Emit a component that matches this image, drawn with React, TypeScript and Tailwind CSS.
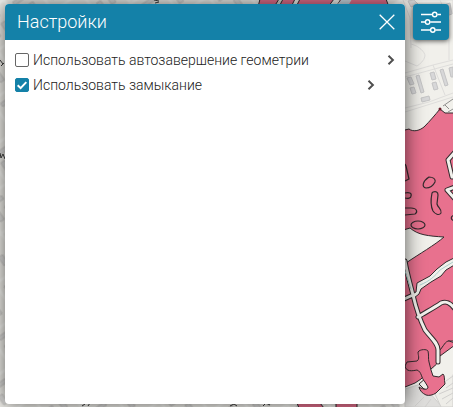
import { useState } from "react";

function MapBackdrop() {
  return (
    <svg
      className="absolute inset-0 h-full w-full"
      viewBox="0 0 453 407"
      preserveAspectRatio="xMaxYMin slice"
      aria-hidden="true"
    >
      <defs>
        <pattern id="blocks" width="34" height="38" patternUnits="userSpaceOnUse" patternTransform="rotate(-35)">
          <path d="M0 2H34M3 0V38" stroke="#f8f8f4" strokeWidth="3" />
          <path d="M9 9h16v4H9zM9 20h5v10H9zM21 20h5v10h-5z" fill="#dededc" stroke="#cecdca" />
        </pattern>
      </defs>
      <rect width="453" height="407" fill="#f1f0eb" />
      <rect width="405" height="407" fill="url(#blocks)" />

      {/* parts of street names */}
      <g fill="none" stroke="#3c3c3c" strokeWidth="1">
        <path d="M0 60l3 4M1 66l3-3M0 153l1 5 2-4 2 5M154 0l5 1M155 3l4-1M82 406l3-2M88 406l2-3M230 406l4-2 3 2M263 406l3-3 4 2" />
      </g>

      {/* streets and buildings on the right */}
      <g fill="none" stroke="#dedddb" strokeWidth="1">
        <path d="M403 0l7 18 1 30M412 0l5 10M440 0l9 20v40M411 44c8 2 14 8 14 12-1 5-5 8-8 10l-12-5" />
        <path d="M405 73l28-8 20-5M405 77l48-13M405 108l24-6 24-9M405 112l48-15M433 65l12 30" />
        <path d="M405 0h48v14" />
      </g>
      <g fill="#d7d7d8" stroke="#c4c4c5" strokeWidth="1">
        <path d="M407 78l4-1 3 7-4 1zM410 88l4-1 2 6-4 1zM416 76l3-1 5 17-3 1zM430 73l4-1 2 7-4 1zM432 83l4-1 2 7-4 1zM440 70l3-1 5 16-3 1zM449 68l4-1v10l-2 0z" />
        <path d="M421 98l8-2 1 4-8 2zM444 5l6-2 2 11-6 2zM408 1l6-1 4 4-7 3z" />
      </g>
      <g fill="#dedddb" stroke="#d0cfcd" strokeWidth="1">
        <path d="M405 389l16-5 8 8 13 15h-37z" />
        <path d="M433 366l20-16v57h-12l-6-13z" fill="#eeede8" />
        <path d="M446 374l7-6M446 381l7-5M446 388l7-5M439 394l14-6M442 399l11-6M446 404l7-6M424 397l-9 9M431 399l-6 8" />
      </g>

      {/* zones behind the panel's upper and lower edges */}
      <g fill="#e8718e" stroke="#322b2e" strokeWidth="1">
        <path d="M260-1h19l-5 8h-16zM283-1h12l-4 8h-12zM300-1h34l-6 8h-32zM341-1h45l3 8h-53z" />
        <path d="M297 403h23l4 5h-25zM336 403h21v5h-21z" />
      </g>
      <path d="M336 6l6-7h10l-4 7z" fill="#cfdde6" />

      {/* main zone */}
      <path
        d="M400 133l5-3 4-1c4 3 10 2 15-2 6-6 11-12 16-18l5 4h10v228l-7 0-8 9-1 12-8 7-10 10-6 4-10 4H400z"
        fill="#e8718e"
        stroke="#332a2d"
        strokeLinejoin="round"
      />
      <g fill="#f1f0eb" stroke="#332a2d" strokeWidth="1" strokeLinejoin="round">
        <path d="M400 231l10-3c8 7 18 8 34 9-9 8-25 17-38 26h-6z" />
        <path d="M430 372l6-6 4-11 15-13v31l-14 9-5-3z" stroke="none" />
        <path d="M419 384l7-6 3 4-1 8-4-1z" />
      </g>
      <path d="M440 356l-1-5c5-5 6-10 10-10l6 2v2z" fill="#e8718e" stroke="#332a2d" />

      {/* roads through the zone */}
      <g fill="none" strokeLinejoin="round" strokeLinecap="round">
        <path
          d="M405 261c2 12 5 22 8 34 3 13 6 23 12 35 6 8 13 13 13 20v12M402 300l11-5M418 317c8-5 16-9 23-14 5-2 9-1 14 6M455 152l-7 8 4 17M455 187l-8 3 8 9"
          stroke="#332a2d"
          strokeWidth="5"
        />
        <path
          d="M456 257l-10 5-9 7-7 7-13 7-1 9-4 2 2 4 5-4 2-5 10-7 10-6 5-6 10-6z"
          fill="#f1f0eb"
          stroke="#332a2d"
        />
        <path
          d="M405 261c2 12 5 22 8 34 3 13 6 23 12 35 6 8 13 13 13 20v12M402 300l11-5M418 317c8-5 16-9 23-14 5-2 9-1 14 6M455 152l-7 8 4 17M455 187l-8 3 8 9"
          stroke="#f1f0eb"
          strokeWidth="3"
        />
        <path d="M405 271l6 18M420 285c10-4 15-9 20-15l13-8" stroke="#a9d0cb" />
      </g>

      {/* winding zone at the lower edge */}
      <path
        d="M405 366l2-4 10-1c3-2 1-6 1-9 2-3 9-3 10-1 1 4 0 8 1 11l2 8 2 6 6 1 4-3c2 2 1 5 2 10l-9 9c-3 2-7 3-10 2-4-2-6-4-7-8 5 3 9 3 9 0l-3-5c-4-4-3-10-8-12-5 1-11 2-12-4z"
        fill="#e8718e"
        stroke="#332a2d"
        strokeLinejoin="round"
      />

      {/* small outlined parcels */}
      <g fill="none" stroke="#332a2d" strokeWidth="1.2">
        <path d="M405 164l1 2 3 13-4 2M405 193c4-1 7 0 6 3 0 2-3 3-6 2M405 208h6c6 0 7 4 4 6l-10 1" />
        <path d="M429 177c4 0 7 2 6 5-2 4-5 6-9 6-5-1-3-7 3-11zM433 192c3-1 5 0 5 3l-1 9c1 4 5 5 4 9-2 3-6 1-8-2-3-6-2-13-1-18z" />
        <ellipse cx="418" cy="225" rx="7" ry="4" />
        <path d="M455 215c-5 1-5 5 0 6" />
      </g>

      {/* road beside the upper boundary */}
      <path d="M443 106l10-7M448 112l5-3M445 105l4 4" stroke="#8e8e8c" strokeWidth="1" fill="none" />
      <circle cx="440" cy="109" r="1.5" fill="#6b1d2c" />
    </svg>
  );
}

function CloseIcon() {
  return (
    <svg className="size-4" viewBox="0 0 16 16" fill="none" stroke="white" strokeWidth="1.3" aria-hidden="true">
      <path d="M.7.7l14.6 14.6M15.3.7L.7 15.3" />
    </svg>
  );
}

function SlidersIcon() {
  return (
    <svg className="h-6 w-6" viewBox="0 0 24 24" fill="none" stroke="white" strokeWidth="1.4" aria-hidden="true">
      <path d="M2 4.5h11.3M18.3 4.5H22M2 12h4.2M11.2 12H22M2 20h9.3M16.3 20H22" />
      <circle cx="15.7" cy="4.5" r="2.2" />
      <circle cx="8.6" cy="12" r="2.2" />
      <circle cx="13.8" cy="20" r="2.2" />
    </svg>
  );
}

function ChevronIcon() {
  return (
    <svg className="h-3 w-2" viewBox="0 0 8 12" fill="none" stroke="#4f4f4f" strokeWidth="2" aria-hidden="true">
      <path d="M1.5 1.7L5.9 6 1.5 10.3" />
    </svg>
  );
}

interface OptionProps {
  id: string;
  label: string;
  initial: boolean;
  inset?: boolean;
}

function Option({ id, label, initial, inset = false }: OptionProps) {
  const [checked, setChecked] = useState(initial);
  return (
    <li className={inset ? "flex h-[25px] items-center pr-5" : "flex h-[25px] items-center"}>
      <span className="grid size-[14px] shrink-0">
        <input
          id={id}
          type="checkbox"
          checked={checked}
          onChange={(e) => setChecked(e.target.checked)}
          className="col-start-1 row-start-1 size-[14px] appearance-none rounded-[2px] border border-[#666666] bg-white checked:border-[#1481a8] checked:bg-[#1481a8]"
        />
        {checked && (
          <svg
            className="pointer-events-none col-start-1 row-start-1 size-[14px]"
            viewBox="0 0 14 14"
            fill="none"
            stroke="white"
            strokeWidth="2"
            aria-hidden="true"
          >
            <path d="M2.7 7.2l2.9 2.9 5.7-6" />
          </svg>
        )}
      </span>
      <label htmlFor={id} className="ml-1 grow truncate text-sm">
        {label}
      </label>
      <button type="button" aria-label={`${label}: параметры`} className="flex h-5 w-3 items-center justify-center">
        <ChevronIcon />
      </button>
    </li>
  );
}

export default function App() {
  return (
    <div className="relative flex h-screen overflow-hidden font-['Roboto','Noto_Sans',sans-serif] font-light text-[#212121]">
      <MapBackdrop />
      <main className="relative flex min-w-0 grow items-start gap-2 pt-1 pr-1 pb-[3px] pl-[5px]">
        <section className="flex min-w-0 grow flex-col self-stretch overflow-hidden rounded bg-white shadow-[0_0_20px_rgba(0,0,0,0.65)]">
          <header className="flex h-9 shrink-0 items-center justify-between bg-[#1481a8] pr-[10px] pl-3 text-white">
            <h1 className="text-lg leading-6">Настройки</h1>
            <button type="button" aria-label="Закрыть">
              <CloseIcon />
            </button>
          </header>
          <ul className="pt-[7px] pr-2 pl-[10px]">
            <Option id="autocomplete" label="Использовать автозавершение геометрии" initial={false} />
            <Option id="closing" label="Использовать замыкание" initial={true} inset />
          </ul>
        </section>
        <button
          type="button"
          aria-label="Настройки"
          className="flex size-9 shrink-0 items-center justify-center rounded bg-[#1481a8] shadow-[0_1px_5px_rgba(0,0,0,0.65)]"
        >
          <SlidersIcon />
        </button>
      </main>
    </div>
  );
}
